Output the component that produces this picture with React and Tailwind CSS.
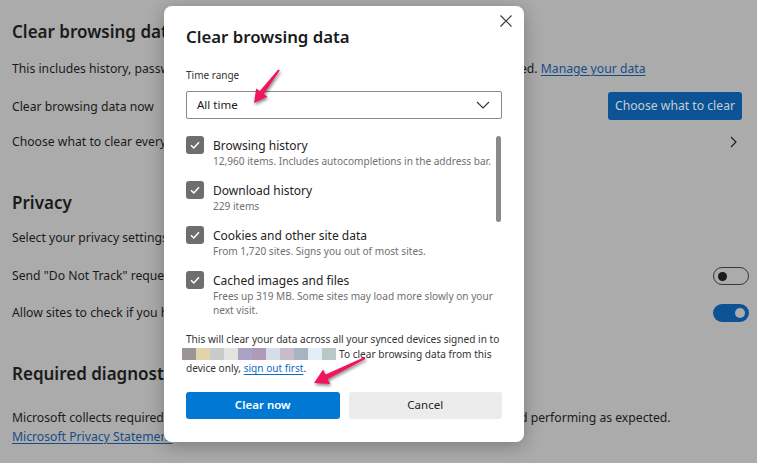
import React from "react";

const blocks = [
  "bg-[#9b9499]",
  "bg-[#e3d3ab]",
  "bg-[#cacaca]",
  "bg-[#e2e4dd]",
  "bg-[#aaa3c8]",
  "bg-[#b09ab6]",
  "bg-[#d7dde8]",
  "bg-[#c8bcc8]",
  "bg-[#a4b5bf]",
  "bg-[#e3eef8]",
  "bg-[#b8c8c5]",
];

const items = [
  { title: "Browsing history", sub: ["12,960 items. Includes autocompletions in the address bar."] },
  { title: "Download history", sub: ["229 items"] },
  { title: "Cookies and other site data", sub: ["From 1,720 sites. Signs you out of most sites."] },
  {
    title: "Cached images and files",
    sub: ["Frees up 319 MB. Some sites may load more slowly on your", "next visit."],
  },
];

const Toggle = ({ on }) =>
  on ? (
    <div className="w-[36px] h-[18px] rounded-full bg-[#0b5394] flex items-center justify-end pr-[4px]">
      <div className="w-[10px] h-[10px] rounded-full bg-[#ababab]" />
    </div>
  ) : (
    <div className="w-[36px] h-[18px] rounded-full border border-[#3a3a3a] flex items-center pl-[4px]">
      <div className="w-[9px] h-[9px] rounded-full bg-[#1a1a1a]" />
    </div>
  );

const Checkbox = () => (
  <div className="w-[18px] h-[18px] shrink-0 rounded-[3px] bg-[#6e6e6e] flex items-center justify-center">
    <svg width="12" height="12" viewBox="0 0 12 12">
      <path d="M2 6.3 L4.8 9 L10 3.3" fill="none" stroke="#fff" strokeWidth="1.5" />
    </svg>
  </div>
);

const SettingsPage = () => (
  <div className="pl-3 pr-[8px] text-[#1a1a1a] text-[12.2px]">
    <div className="mt-[18px] h-[28px] leading-[28px] text-[17px] font-semibold">
      Clear browsing data
    </div>
    <div className="mt-[13px] h-[20px] leading-[20px] flex whitespace-nowrap">
      <span className="w-[508px] overflow-hidden">
        This includes history, passwords, cookies, and more. Only data from this profile will be delet
      </span>
      <span>
        ed.{" "}
        <span className="text-[#174d86] underline underline-offset-2">Manage your data</span>
      </span>
    </div>
    <div className="mt-[13px] h-[28px] flex items-center justify-between">
      <span className="mt-[2px]">Clear browsing data now</span>
      <div className="h-[28px] mr-[7px] px-[7px] rounded-[3px] bg-[#0b5394] text-[#c7cdd6] flex items-center">
        Choose what to clear
      </div>
    </div>
    <div className="mt-[12px] h-[20px] flex items-center justify-between">
      <span>Choose what to clear every time you close the browser</span>
      <svg width="10" height="12" viewBox="0 0 10 12" className="mr-[11px]">
        <path d="M3 1 L8 6 L3 11" fill="none" stroke="#1a1a1a" strokeWidth="1.1" />
      </svg>
    </div>
    <div className="mt-[37px] h-[28px] leading-[28px] text-[17px] font-semibold">Privacy</div>
    <div className="mt-[11px] h-[20px] leading-[20px]">
      Select your privacy settings for Microsoft Edge.
    </div>
    <div className="mt-[18px] h-[20px] flex items-center justify-between">
      <span className="mt-[1px]">Send "Do Not Track" requests</span>
      <Toggle />
    </div>
    <div className="mt-[17px] h-[20px] flex items-center justify-between">
      <span className="mt-[1px]">Allow sites to check if you have payment methods saved</span>
      <Toggle on />
    </div>
    <div className="mt-[37px] h-[28px] leading-[28px] text-[17px] font-semibold">
      Required diagnostic data
    </div>
    <div className="mt-[20px] leading-[19px]">
      <div className="flex whitespace-nowrap">
        <span className="w-[508px] overflow-hidden">
          Microsoft collects required diagnostic data to keep Microsoft Edge secure, up to date an
        </span>
        <span>d performing as expected.</span>
      </div>
      <span className="text-[#174d86] underline underline-offset-2">Microsoft Privacy Statement</span>
    </div>
  </div>
);

const Dialog = () => (
  <div className="absolute left-[164px] top-[6px] w-[360px] bg-white rounded-[8px] shadow-[0_4px_18px_rgba(0,0,0,0.28)] px-[22px] pt-[17px] pb-[23px] text-[#1a1a1a]">
    <svg width="14" height="14" viewBox="0 0 14 14" className="absolute left-[335px] top-[8px]">
      <path d="M1.5 1.5 L12.5 12.5 M12.5 1.5 L1.5 12.5" stroke="#333" strokeWidth="1.1" />
    </svg>
    <div className="h-[28px] leading-[28px] text-[16.8px] font-semibold">Clear browsing data</div>
    <div className="mt-[16px] h-[16px] leading-[16px] text-[10px] text-[#333]">Time range</div>
    <div className="mt-[8px] h-[28px] border border-[#8a8a8a] rounded-[2px] flex items-center justify-between pl-[10px] pr-[11px] text-[11.5px]">
      <span>All time</span>
      <svg width="14" height="8" viewBox="0 0 14 8">
        <path d="M1 1 L7 7 L13 1" fill="none" stroke="#333" strokeWidth="1.1" />
      </svg>
    </div>
    <div className="relative mt-[14px] h-[185px] overflow-hidden pt-[3px]">
      <div className="absolute right-[1px] top-[3px] w-[5px] h-[86px] rounded-full bg-[#8a8a8a]" />
      {items.map((it) => (
        <div key={it.title} className="h-[45px] flex gap-[9px]">
          <Checkbox />
          <div className="whitespace-nowrap pt-[1px]">
            <div className="h-[18px] leading-[18px] text-[12px] text-[#242424]">{it.title}</div>
            <div className="-mt-[1px] leading-[14px] text-[10.1px] text-[#707070]">
              {it.sub.map((s) => (
                <div key={s}>{s}</div>
              ))}
            </div>
          </div>
        </div>
      ))}
    </div>
    <div className="mt-[14px] text-[10.1px] leading-[14.5px] text-[#333]">
      <div className="whitespace-nowrap">
        This will clear your data across all your synced devices signed in to
      </div>
      <div className="flex items-center whitespace-nowrap -ml-[4px]">
        <span className="flex">
          {blocks.map((b, i) => (
            <span key={i} className={`w-[14px] h-[12px] ${b}`} />
          ))}
        </span>
        <span className="ml-[3px]">To clear browsing data from this</span>
      </div>
      <div className="whitespace-nowrap">
        device only, <span className="text-[#0f6cbd] underline underline-offset-2">sign out first</span>.
      </div>
    </div>
    <div className="mt-[16px] grid grid-cols-2 gap-[9px] text-[11.5px]">
      <div className="h-[27px] rounded-[3px] bg-[#0078d4] text-white font-semibold flex items-center justify-center">
        Clear now
      </div>
      <div className="h-[27px] rounded-[3px] bg-[#ececec] text-[#242424] flex items-center justify-center">
        Cancel
      </div>
    </div>
  </div>
);

const Arrows = () => (
  <svg
    width="757"
    height="463"
    viewBox="0 0 757 463"
    className="absolute left-0 top-0 pointer-events-none drop-shadow-[1px_2px_1.5px_rgba(0,0,0,0.45)]"
  >
    <polygon
      points="279.8,70.6 263.8,94.1 267.4,96.8 254,103 256.2,88.4 259.8,91.1 278.2,69.4"
      fill="#f2155c"
    />
    <polygon
      points="365.4,358.9 327.7,379 330.1,384 314,383 323.1,369.6 325.5,374.6 364.6,357.1"
      fill="#f2155c"
    />
  </svg>
);

export default function App() {
  return (
    <div className="relative w-[757px] h-[463px] overflow-hidden bg-[#ababab] font-['Noto_Sans',sans-serif]">
      <SettingsPage />
      <Dialog />
      <Arrows />
    </div>
  );
}
